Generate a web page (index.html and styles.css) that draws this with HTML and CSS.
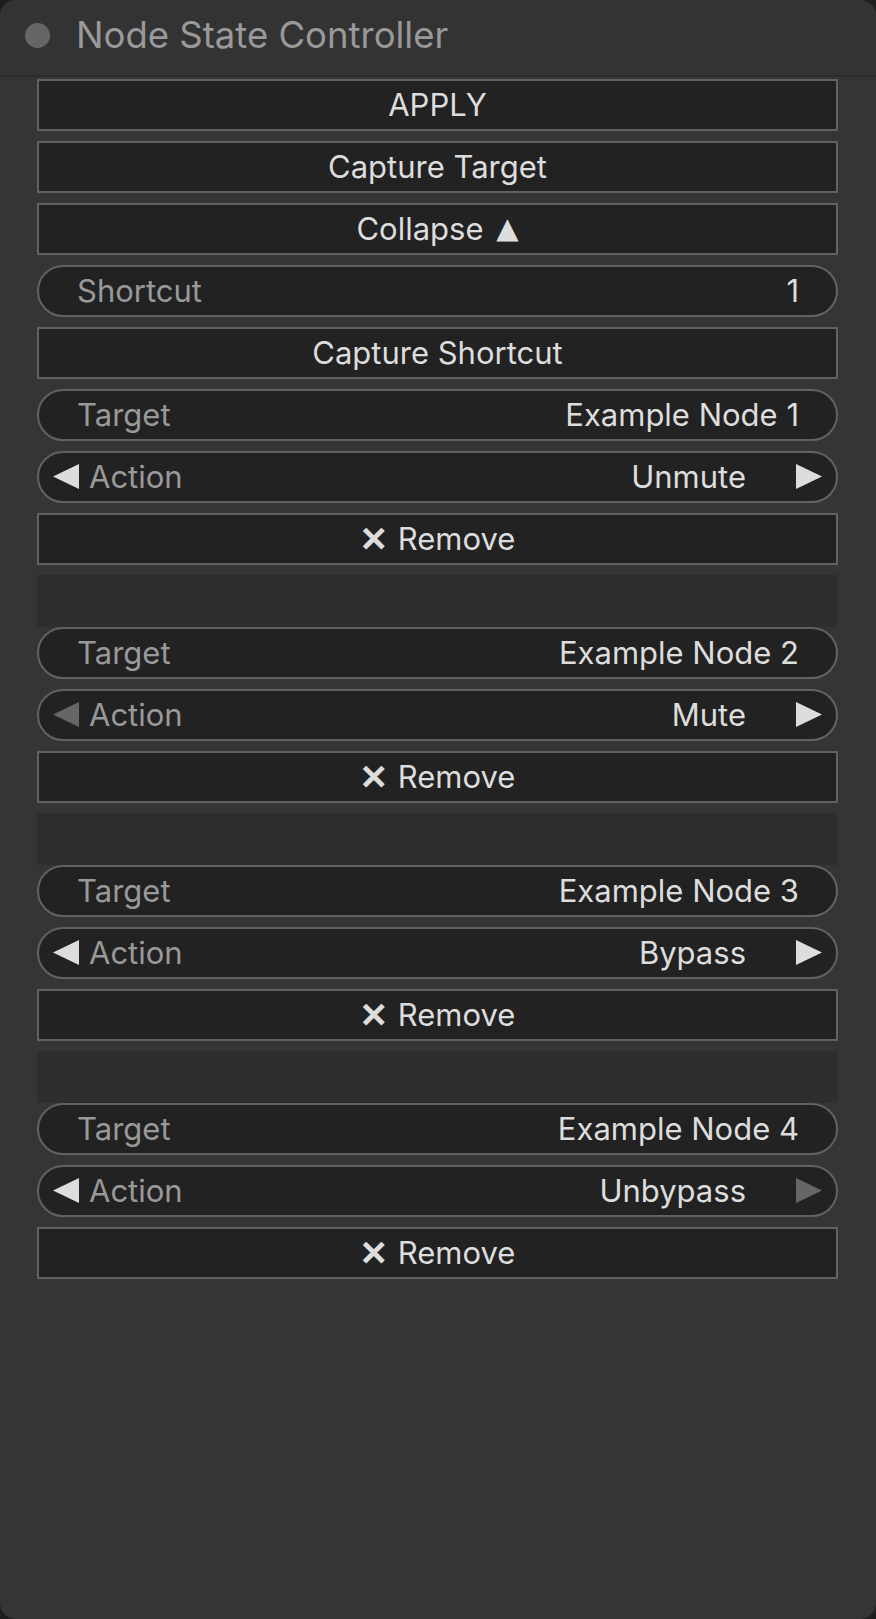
FILE: index.html
```html
<!DOCTYPE html>
<html>
<head>
<meta charset="utf-8">
<link rel="stylesheet" href="styles.css">
</head>
<body>
<div class="node">
  <div class="header">
    <span class="dot"></span>
    <span class="title">Node State Controller</span>
  </div>
  <div class="widgets">
    <div class="btn">APPLY</div>
    <div class="btn">Capture Target</div>
    <div class="btn">Collapse <span class="tri">▲</span></div>
    <div class="pill"><span class="label">Shortcut</span><span class="value">1</span></div>
    <div class="btn">Capture Shortcut</div>
    <div class="entry">
      <div class="pill"><span class="label">Target</span><span class="value">Example Node 1</span></div>
      <div class="pill combo">
        <svg class="arrow" viewBox="0 0 26 25"><polygon points="26,0 26,25 0,12.5"/></svg>
        <span class="label">Action</span><span class="value">Unmute</span>
        <svg class="arrow" viewBox="0 0 26 25"><polygon points="0,0 0,25 26,12.5"/></svg>
      </div>
      <div class="btn"><span class="x">✕</span> Remove</div>
    </div>
    <div class="section">
      <div class="spacer"></div>
      <div class="entry">
        <div class="pill"><span class="label">Target</span><span class="value">Example Node 2</span></div>
        <div class="pill combo">
          <svg class="arrow dim" viewBox="0 0 26 25"><polygon points="26,0 26,25 0,12.5"/></svg>
          <span class="label">Action</span><span class="value">Mute</span>
          <svg class="arrow" viewBox="0 0 26 25"><polygon points="0,0 0,25 26,12.5"/></svg>
        </div>
        <div class="btn"><span class="x">✕</span> Remove</div>
      </div>
    </div>
    <div class="section">
      <div class="spacer"></div>
      <div class="entry">
        <div class="pill"><span class="label">Target</span><span class="value">Example Node 3</span></div>
        <div class="pill combo">
          <svg class="arrow" viewBox="0 0 26 25"><polygon points="26,0 26,25 0,12.5"/></svg>
          <span class="label">Action</span><span class="value">Bypass</span>
          <svg class="arrow" viewBox="0 0 26 25"><polygon points="0,0 0,25 26,12.5"/></svg>
        </div>
        <div class="btn"><span class="x">✕</span> Remove</div>
      </div>
    </div>
    <div class="section">
      <div class="spacer"></div>
      <div class="entry">
        <div class="pill"><span class="label">Target</span><span class="value">Example Node 4</span></div>
        <div class="pill combo">
          <svg class="arrow" viewBox="0 0 26 25"><polygon points="26,0 26,25 0,12.5"/></svg>
          <span class="label">Action</span><span class="value">Unbypass</span>
          <svg class="arrow dim" viewBox="0 0 26 25"><polygon points="0,0 0,25 26,12.5"/></svg>
        </div>
        <div class="btn"><span class="x">✕</span> Remove</div>
      </div>
    </div>
  </div>
</div>
</body>
</html>
```
FILE: styles.css
```css
html, body {
  margin: 0;
  padding: 0;
  background: #1e1e1e;
}
body {
  font-family: Inter, "Noto Sans", sans-serif;
  width: 876px;
  height: 1619px;
  overflow: hidden;
}
.node {
  width: 876px;
  height: 1619px;
  background: #353535;
  border-radius: 16px;
  overflow: hidden;
  box-sizing: border-box;
}
.header {
  height: 75px;
  background: #333333;
  border-bottom: 2px solid #2b2b2b;
  display: flex;
  align-items: center;
  padding-left: 25px;
  box-sizing: content-box;
}
.dot {
  width: 25px;
  height: 25px;
  border-radius: 50%;
  background: #666666;
  flex: none;
  margin-top: -4px;
}
.title {
  margin-left: 26px;
  font-size: 36.5px;
  color: #999999;
  margin-top: -5px;
}
.widgets {
  padding: 2px 38px 0 37px;
  display: flex;
  flex-direction: column;
  gap: 10px;
}
.entry {
  display: flex;
  flex-direction: column;
  gap: 10px;
}
.section {
  display: flex;
  flex-direction: column;
}
.spacer {
  height: 52px;
  background: #2e2e2e;
}
.btn, .pill {
  height: 52px;
  box-sizing: border-box;
  border: 2px solid #626262;
  background: #222222;
  color: #dddddd;
  font-size: 31px;
  line-height: 1;
  padding-bottom: 1px;
  display: flex;
  align-items: center;
  white-space: pre;
}
.btn {
  justify-content: center;
}
.tri {
  font-family: "DejaVu Sans", sans-serif;
  font-size: 29px;
  margin-left: 4px;
}
.x {
  font-family: "DejaVu Sans", sans-serif;
  font-size: 34px;
  -webkit-text-stroke: 1.4px #dddddd;
  margin-right: 1px;
}
.pill {
  border-radius: 26px;
  padding: 0 37px 1px 38px;
}
.label {
  color: #999999;
  flex: 1;
}
.value {
  color: #dddddd;
}
.combo {
  padding: 0 14px 1px 14px;
}
.combo .label {
  margin-left: 10px;
}
.combo .value {
  margin-right: 50px;
}
.arrow {
  width: 26px;
  height: 25px;
  fill: #dddddd;
  flex: none;
}
.arrow.dim {
  fill: #666666;
}
```
